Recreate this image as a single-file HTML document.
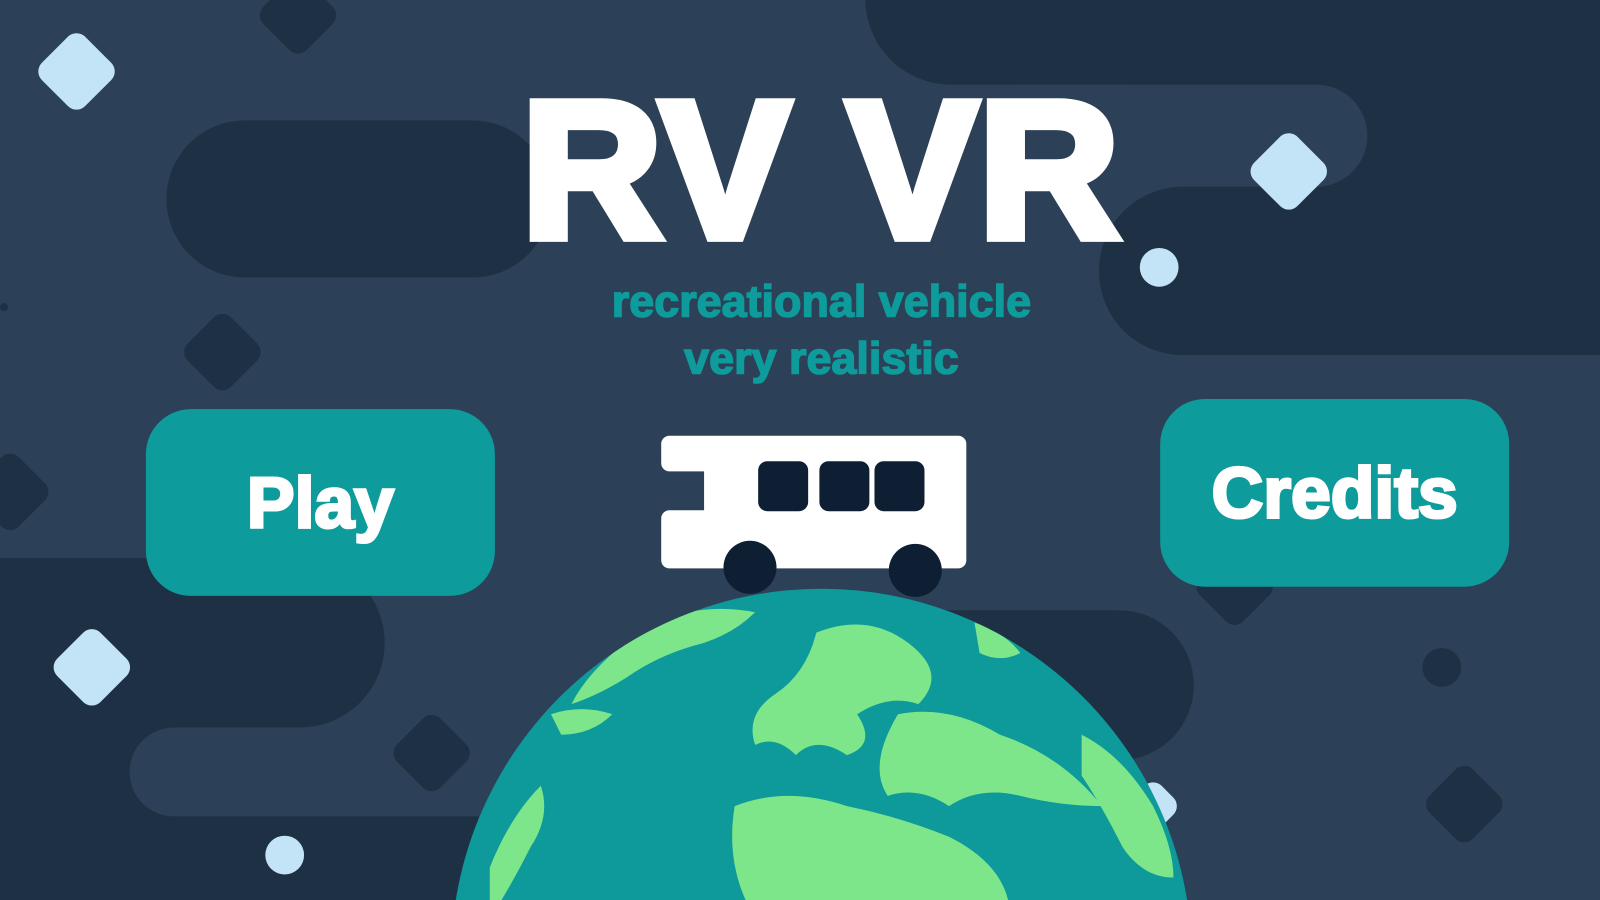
<!DOCTYPE html>
<html><head><meta charset="utf-8"><style>
html,body{margin:0;padding:0;width:1600px;height:900px;overflow:hidden;background:#2c4157}
#w{position:absolute;left:0;top:0;width:1600px;height:900px;overflow:hidden}
#s{position:absolute;left:0;top:0;width:1568px;height:882px;transform:scale(1.0204,1.0204);transform-origin:0 0;overflow:hidden;background:#2c4157;font-family:"Liberation Sans",sans-serif}
.a{position:absolute}
.d{background:#1e3144}
.b{background:#2c4157}
.dm{position:absolute;width:60px;height:60px;border-radius:12px;transform:rotate(45deg)}
.lt{background:#c3e3f7}
.btn{position:absolute;background:#0e9b9b;border-radius:44px;color:#fff;font-weight:bold;display:flex;align-items:center;justify-content:center;-webkit-text-stroke:3px #fff}
</style></head><body><div id="w"><div id="s">
<div class="a d" style="left:848px;top:-100px;width:800px;height:183px;border-radius:0 0 0 84px"></div>
<div class="a d" style="left:1100px;top:60px;width:600px;height:123px"></div>
<div class="a b" style="left:1000px;top:83px;width:340px;height:100px;border-radius:0 50px 50px 0"></div>
<div class="a d" style="left:1077px;top:183px;width:600px;height:165px;border-radius:82px 0 0 82px"></div>
<div class="a d" style="left:163px;top:118px;width:377px;height:154px;border-radius:77px"></div>
<div class="a d" style="left:-50px;top:547px;width:427px;height:166px;border-radius:0 83px 83px 0"></div>
<div class="a d" style="left:-50px;top:740px;width:520px;height:160px"></div>
<div class="a d" style="left:0;top:620px;width:200px;height:120px"></div>
<div class="a b" style="left:127px;top:713px;width:400px;height:87px;border-radius:44px 0 0 44px"></div>
<div class="a d" style="left:900px;top:598px;width:270px;height:147px;border-radius:0 74px 74px 0"></div>
<div class="a d" style="left:0;top:297px;width:8px;height:8px;border-radius:50%"></div>

<div class="dm lt" style="left:45px;top:40px"></div>
<div class="dm lt" style="left:1233px;top:138px"></div>
<div class="dm lt" style="left:60px;top:624px"></div>
<div class="dm d" style="left:262px;top:-15px"></div>
<div class="dm d" style="left:188px;top:315px"></div>
<div class="dm d" style="left:393px;top:708px"></div>
<div class="dm d" style="left:1405px;top:758px"></div>
<div class="dm d" style="left:1180px;top:545px"></div>
<div class="dm d" style="left:-20px;top:452px"></div>
<div class="dm lt" style="left:1110px;top:770px;width:40px;height:40px"></div>

<div class="a lt" style="left:1117px;top:243px;width:38px;height:38px;border-radius:50%"></div>
<div class="a lt" style="left:260px;top:819px;width:38px;height:38px;border-radius:50%"></div>
<div class="a d" style="left:1394px;top:635px;width:38px;height:38px;border-radius:50%"></div>

<div class="a" style="left:500px;top:62px;width:610px;text-align:center;color:#fff;font-weight:bold;font-size:190px;line-height:210px;letter-spacing:2px;-webkit-text-stroke:10px #fff">RV VR</div>
<div class="a" style="left:500px;top:268px;width:610px;text-align:center;color:#0e9b9b;font-weight:bold;font-size:44px;line-height:56px;-webkit-text-stroke:1.5px #0e9b9b">recreational vehicle<br>very realistic</div>

<div class="btn" style="left:143px;top:401px;width:342px;height:183px;font-size:70px">Play</div>
<div class="btn" style="left:1137px;top:391px;width:342px;height:184px;font-size:70px">Credits</div>

<svg class="a" style="left:0;top:0" width="1568" height="882">
<path d="M656 427H939a8 8 0 0 1 8 8V549a8 8 0 0 1-8 8H656a8 8 0 0 1-8-8V508a8 8 0 0 1 8-8H690V462H656a8 8 0 0 1-8-8V435a8 8 0 0 1 8-8Z" fill="#fff"/>
<rect x="743" y="452" width="49" height="49" rx="9" fill="#0f1f33"/>
<rect x="803" y="452" width="49" height="49" rx="9" fill="#0f1f33"/>
<rect x="857" y="452" width="49" height="49" rx="9" fill="#0f1f33"/>
<circle cx="735" cy="556" r="26" fill="#0f1f33"/>
<circle cx="897" cy="559" r="26" fill="#0f1f33"/>
<clipPath id="g"><circle cx="805" cy="940" r="363"/></clipPath>
<circle cx="805" cy="940" r="363" fill="#0e9a9a"/>
<g clip-path="url(#g)" fill="#7ee68a">
<path d="M640 610 Q690 590 740 600 Q720 620 690 630 Q650 640 620 660 Q590 680 560 690 Q580 650 640 610Z"/>
<path d="M800 620 Q850 600 890 630 Q930 660 900 690 Q870 680 840 700 Q860 730 830 740 Q800 720 780 740 Q760 720 740 730 Q730 700 760 680 Q790 660 800 620Z"/>
<path d="M880 700 Q930 690 980 720 Q1040 740 1080 790 Q1040 790 1000 780 Q960 770 930 790 Q900 770 870 780 Q850 750 880 700Z"/>
<path d="M720 790 Q770 770 830 790 Q880 800 930 820 Q990 850 990 900 L740 900 Q710 850 720 790Z"/>
<path d="M1060 720 Q1100 740 1130 790 Q1150 830 1150 860 Q1120 860 1100 830 Q1080 790 1060 760Z"/>
<path d="M480 850 Q500 800 530 770 Q540 800 520 830 Q500 870 480 900Z"/>
<path d="M540 700 Q570 690 600 700 Q580 720 550 720Z"/>
<path d="M955 610 Q985 620 1000 640 Q980 650 960 640Z"/>
</g>
</svg>
</div></div></body></html>
